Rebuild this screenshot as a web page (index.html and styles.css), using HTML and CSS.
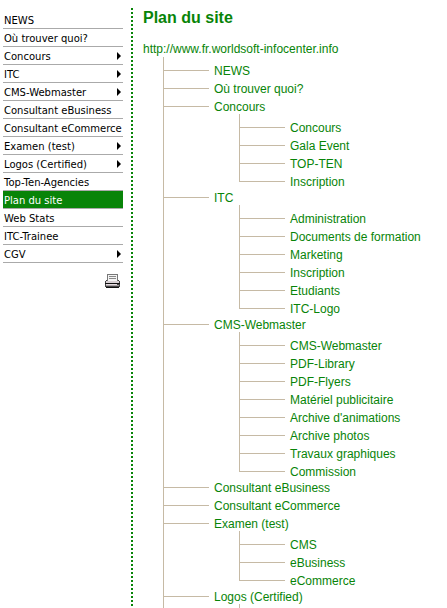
FILE: index.html
```
<!DOCTYPE html>
<html lang="fr">
<head>
    <meta charset="UTF-8">
    <meta name="viewport" content="width=device-width, initial-scale=1.0">
    <title>Plan du site</title>
    <link rel="stylesheet" href="styles.css">
</head>
<body>
    <div class="page">
        <aside class="sidebar">
            <nav class="menu">
                <a href="#">NEWS</a>
                <a href="#">Où trouver quoi?</a>
                <a href="#" class="has-sub">Concours</a>
                <a href="#" class="has-sub">ITC</a>
                <a href="#" class="has-sub">CMS-Webmaster</a>
                <a href="#">Consultant eBusiness</a>
                <a href="#">Consultant eCommerce</a>
                <a href="#" class="has-sub">Examen (test)</a>
                <a href="#" class="has-sub">Logos (Certified)</a>
                <a href="#">Top-Ten-Agencies</a>
                <a href="#" class="active">Plan du site</a>
                <a href="#">Web Stats</a>
                <a href="#">ITC-Trainee</a>
                <a href="#" class="has-sub">CGV</a>
            </nav>
            <button type="button" class="print" aria-label="Imprimer">
                <svg width="16" height="15" viewBox="0 0 16 15" shape-rendering="crispEdges">
                    <path d="M2 0h11v8H2z" fill="#777"/>
                    <path d="M3 1h9v7H3z" fill="#f4f4f4"/>
                    <path d="M4 2h7v1H4zM4 4h7v1H4z" fill="#888"/>
                    <path d="M1 6h1v1h11V6h1v1h1v6h-1v1H1v-1H0V7h1z" fill="#444"/>
                    <path d="M1 7h13v2H1z" fill="#d8d0d4"/>
                    <path d="M0 9h15v1H0z" fill="#111"/>
                    <path d="M1 10h11v1H1z" fill="#e4dce0"/>
                    <path d="M1 11h13v1H1z" fill="#a8a0a4"/>
                    <path d="M1 13h13v1H1z" fill="#111"/>
                </svg>
            </button>
        </aside>

        <main class="content">
            <h1>Plan du site</h1>
            <a href="#" class="root">http://www.fr.worldsoft-infocenter.info</a>
            <ul class="tree">
                <li><a href="#">NEWS</a></li>
                <li><a href="#">Où trouver quoi?</a></li>
                <li>
                    <a href="#">Concours</a>
                    <ul>
                        <li><a href="#">Concours</a></li>
                        <li><a href="#">Gala Event</a></li>
                        <li><a href="#">TOP-TEN</a></li>
                        <li><a href="#">Inscription</a></li>
                    </ul>
                </li>
                <li>
                    <a href="#">ITC</a>
                    <ul>
                        <li><a href="#">Administration</a></li>
                        <li><a href="#">Documents de formation</a></li>
                        <li><a href="#">Marketing</a></li>
                        <li><a href="#">Inscription</a></li>
                        <li><a href="#">Etudiants</a></li>
                        <li><a href="#">ITC-Logo</a></li>
                    </ul>
                </li>
                <li>
                    <a href="#">CMS-Webmaster</a>
                    <ul>
                        <li><a href="#">CMS-Webmaster</a></li>
                        <li><a href="#">PDF-Library</a></li>
                        <li><a href="#">PDF-Flyers</a></li>
                        <li><a href="#">Matériel publicitaire</a></li>
                        <li><a href="#">Archive d'animations</a></li>
                        <li><a href="#">Archive photos</a></li>
                        <li><a href="#">Travaux graphiques</a></li>
                        <li><a href="#">Commission</a></li>
                    </ul>
                </li>
                <li><a href="#">Consultant eBusiness</a></li>
                <li><a href="#">Consultant eCommerce</a></li>
                <li>
                    <a href="#">Examen (test)</a>
                    <ul>
                        <li><a href="#">CMS</a></li>
                        <li><a href="#">eBusiness</a></li>
                        <li><a href="#">eCommerce</a></li>
                    </ul>
                </li>
                <li>
                    <a href="#">Logos (Certified)</a>
                    <ul class="more"></ul>
                </li>
            </ul>
        </main>
    </div>
</body>
</html>
```
FILE: styles.css
```
* {
    box-sizing: border-box;
    margin: 0;
    padding: 0;
}

body {
    height: 100vh;
    overflow: hidden;
    background-color: #fff;
    font-family: "Liberation Sans", Arial, sans-serif;
    font-size: 12px;
    color: #088408;
}

a {
    color: inherit;
    text-decoration: none;
}

.page {
    display: flex;
    padding-top: 8px;
}

/* left menu */
.sidebar {
    flex: none;
    width: 131px;
    padding: 3px 8px 0 3px;
}

.menu a {
    display: flex;
    align-items: center;
    justify-content: space-between;
    height: 18px;
    padding: 1px 2px 0 1px;
    border-bottom: 1px solid #aaa;
    font-family: "DejaVu Sans", Verdana, sans-serif;
    font-size: 10px;
    color: #000;
    white-space: nowrap;
}

.menu .has-sub::after {
    content: "";
    border: 4px solid transparent;
    border-left-color: #000;
    border-right: none;
}

.menu .active {
    background-color: #088408;
    color: #fff;
}

.print {
    display: block;
    margin: 11px 2px 0 auto;
    border: none;
    background: none;
    cursor: pointer;
}

.print svg {
    display: block;
}

/* sitemap */
.content {
    flex: 1;
    min-width: 0;
    padding-left: 12px;
    background: repeating-linear-gradient(#088408 0 2px, #fff 2px 4px) left top / 2px 100% no-repeat;
}

h1 {
    margin-bottom: 20px;
    font-size: 16px;
    line-height: 20px;
}

.root {
    display: block;
    height: 9px;
    line-height: 2px;
}

ul {
    padding-top: 5px;
    list-style: none;
    background: linear-gradient(#c6baa5, #c6baa5) left top / 1px calc(100% - 9px) no-repeat;
}

.tree {
    margin-left: 20px;
}

.tree ul {
    margin: -2px 0 -2px 76px;
}

.tree a {
    display: flex;
    align-items: center;
    gap: 5px;
    height: 18px;
    white-space: nowrap;
}

/* 2px box with the line on its upper half keeps it on whole pixels */
.tree a::before {
    content: "";
    width: 46px;
    height: 2px;
    border-top: 1px solid #c6baa5;
}

.tree .more {
    height: 40px;
}
```
